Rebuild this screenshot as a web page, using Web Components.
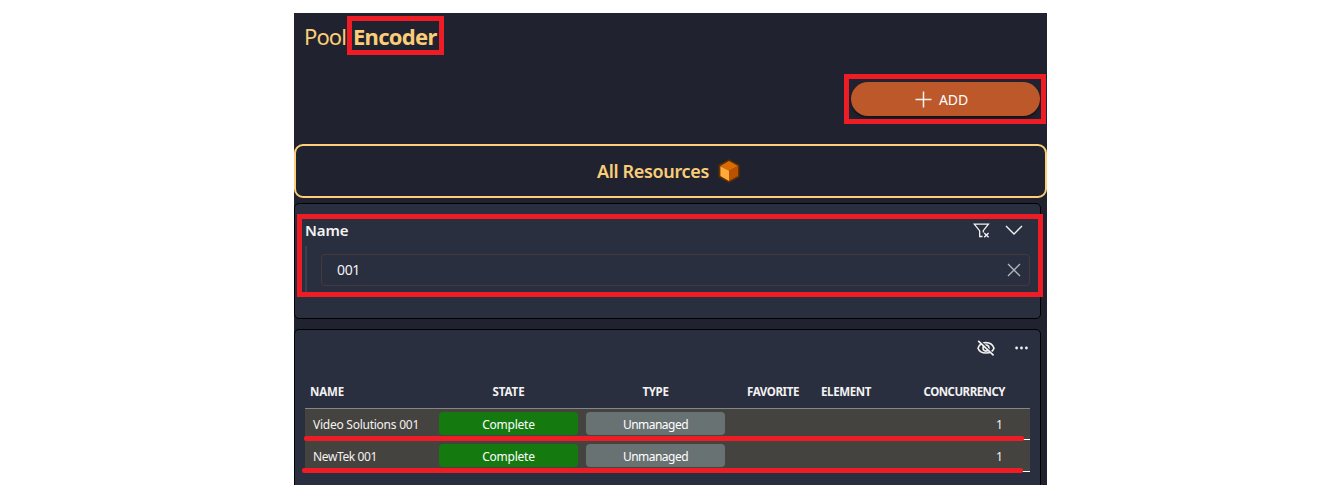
<!DOCTYPE html>
<html lang="en">
<head>
<meta charset="utf-8">
<title>Pool Encoder</title>
<style>
body{margin:0;background:#fff;height:498px;overflow:hidden;font-family:"Noto Sans","Open Sans",sans-serif;color:#f3f2f1}
</style>
</head>
<body>
<pool-page></pool-page>
<script>
// Text label whose tracking is adjusted so that it fills the width given in "w".
class FitText extends HTMLElement{
  connectedCallback(){
    const r=this.attachShadow({mode:'open'});
    r.innerHTML='<style>:host{display:inline-block;white-space:nowrap;line-height:20px}span{display:inline-block}</style><span><slot></slot></span>';
    const s=r.querySelector('span'),w=parseFloat(this.getAttribute('w'));
    const n=this.textContent.length,now=s.getBoundingClientRect().width;
    s.style.letterSpacing=((w-now)/n)+'px';
    this.style.width=w+'px';
  }
}

// Red annotation frame laid over its positioned parent.
class MarkBox extends HTMLElement{
  connectedCallback(){
    this.attachShadow({mode:'open'}).innerHTML='<style>:host{position:absolute;box-sizing:border-box;border:5px solid #ee1c24;pointer-events:none;z-index:2}</style>';
  }
}
class MarkLine extends HTMLElement{
  connectedCallback(){
    this.attachShadow({mode:'open'}).innerHTML='<style>:host{position:absolute;height:5px;border-radius:2px;background:#ee1c24;z-index:2}</style>';
  }
}

class UiIcon extends HTMLElement{
  connectedCallback(){
    const g={
      plus:[17,17,'<path d="M8.5 .5v16M.5 8.5h16" stroke-width="1.5"/>'],
      filter:[17,15,'<path d="M9.5 13.5H6.7V7.9L1.3 1.2H15.4L10.3 7.7V9.4" stroke-width="1.3"/><path d="M11.2 9.9L15.6 14.3M15.6 9.9L11.2 14.3" stroke-width="1.4"/>'],
      chevron:[18,10,'<path d="M1 1L9 9L17 1" stroke-width="1.4"/>'],
      close:[14,14,'<path d="M1 1L13 13M13 1L1 13" stroke-width="1.3" stroke="#b3b7be"/>'],
      hidden:[18,16,'<path d="M1 8.2C2.2 4.7 5 2.6 9 2.6S15.8 4.7 17 8.2C15.8 11.5 13 13 9 13S2.2 11.5 1 8.2Z" stroke-width="1.6"/><circle cx="9" cy="8.1" r="3" stroke-width="1.6"/><path d="M3 .8L17.2 15" stroke="#292f3f" stroke-width="1.6"/><path d="M1.2 .8L16.6 15.4" stroke-width="1.7"/>'],
      more:[13,4,'<g fill="#f3f2f1" stroke="none"><circle cx="1.6" cy="2" r="1.4"/><circle cx="6.5" cy="2" r="1.4"/><circle cx="11.4" cy="2" r="1.4"/></g>'],
      cube:[22,24,'<path d="M11 .8L21.2 6.2V17.8L11 23.4L.8 17.8V6.2Z" fill="#6b3600" stroke="#4c2c0c" stroke-width="1"/><path d="M11 2L20 7L11 12L2.4 7Z" fill="#d96b04" stroke="none"/><path d="M11 11.8L20 7V17L11 22Z" fill="#b95200" stroke="none"/><path d="M2.4 7.2L11 11.8V22L2.4 17Z" fill="#ffa938" stroke="none"/>']
    }[this.getAttribute('name')];
    this.attachShadow({mode:'open'}).innerHTML=`<style>:host{display:block;flex:none;width:${g[0]}px;height:${g[1]}px}svg{display:block}</style><svg width="${g[0]}" height="${g[1]}" viewBox="0 0 ${g[0]} ${g[1]}" fill="none" stroke="#f3f2f1">${g[2]}</svg>`;
  }
}

class AddButton extends HTMLElement{
  connectedCallback(){
    this.attachShadow({mode:'open'}).innerHTML=`<style>
    :host{display:flex;position:relative;box-sizing:border-box;width:189px;height:34px;border-radius:17px;background:#bd582b;box-shadow:0 2px 3px #0008;align-items:center;padding-left:64px;gap:7px;font-size:14px;color:#fff}
    mark-box{left:-7px;top:-8px;width:202px;height:50px}
    fit-text{position:relative;top:1px}</style>
    <ui-icon name="plus"></ui-icon><fit-text w="29">ADD</fit-text><mark-box></mark-box>`;
  }
}

class FilterPanel extends HTMLElement{
  connectedCallback(){
    this.attachShadow({mode:'open'}).innerHTML=`<style>
    :host{display:block;position:relative;box-sizing:border-box;width:747px;height:116px;border:1px solid #000;border-radius:5px;background:#292f3f;padding:16px 10px 0}
    .head{display:flex;align-items:center;height:20px;font-size:15px;font-weight:600;gap:15px;padding-right:7px}
    .head fit-text{margin-right:auto}
    .body{margin-top:6px;border-left:2px solid #3a4051;height:46px;padding:8px 0 0 14px;box-sizing:border-box}
    .field{box-sizing:border-box;height:32px;border:1px solid #43393f;border-radius:4px;display:flex;align-items:center;justify-content:space-between;padding:0 8px 0 15px;font-size:14px}
    mark-box{left:2px;top:10px;width:746px;height:83px}</style>
    <div class="head"><fit-text w="43.5">Name</fit-text><ui-icon name="filter"></ui-icon><ui-icon name="chevron"></ui-icon></div>
    <div class="body"><div class="field"><fit-text w="23">001</fit-text><ui-icon name="close"></ui-icon></div></div>
    <mark-box></mark-box>`;
  }
}

class ResourceRow extends HTMLElement{
  connectedCallback(){
    this.attachShadow({mode:'open'}).innerHTML=`<style>
    :host{display:grid;position:relative;box-sizing:border-box;grid-template-columns:126px 139px 139px 1fr;column-gap:8px;align-items:start;height:32px;padding-top:4px;background:#454340;border-bottom:1px solid #fff;font-size:12px}
    .name{padding:3px 0 0 8px}
    .pill{height:23px;border-radius:4px;display:flex;justify-content:center;align-items:center;padding-top:2px;box-sizing:border-box;color:#fff}
    .ok{background:#147a10}.un{background:#697273}
    .num{padding:3px 27px 0 0;text-align:right}
    fit-text{display:block}
    .num fit-text{margin-left:auto}</style>
    <div class="name"><fit-text w="${this.getAttribute('w')}">${this.getAttribute('name')}</fit-text></div>
    <div class="pill ok"><fit-text w="52.5">Complete</fit-text></div>
    <div class="pill un"><fit-text w="65">Unmanaged</fit-text></div>
    <div class="num"><fit-text w="7">1</fit-text></div><slot></slot>`;
  }
}

class ResourceTable extends HTMLElement{
  connectedCallback(){
    this.attachShadow({mode:'open'}).innerHTML=`<style>
    :host{display:block;box-sizing:border-box;width:747px;height:170px;border:1px solid #000;border-radius:5px;background:#292f3f;padding:10px 10px 0}
    .tools{display:flex;justify-content:flex-end;align-items:center;gap:20px;height:16px;padding-right:2px}
    .head{position:relative;z-index:1;display:grid;box-sizing:border-box;grid-template-columns:125px 147px 147px 70px 72px 1fr;height:52px;padding:26px 25px 0 5px;font-size:11.5px;font-weight:700;box-shadow:0 1px #85868a}
    .c{text-align:center}.r{text-align:right}
    mark-line{top:28px}</style>
    <div class="tools"><ui-icon name="hidden"></ui-icon><ui-icon name="more"></ui-icon></div>
    <div class="head"><div><fit-text w="34">NAME</fit-text></div><div class="c"><fit-text w="32">STATE</fit-text></div><div class="c"><fit-text w="26">TYPE</fit-text></div><div class="r"><fit-text w="52">FAVORITE</fit-text></div><div class="r"><fit-text w="50">ELEMENT</fit-text></div><div class="r"><fit-text w="81.5">CONCURRENCY</fit-text></div></div>
    <resource-row name="Video Solutions 001" w="106"><mark-line style="left:-1px;width:720px"></mark-line></resource-row>
    <resource-row name="NewTek 001" w="64"><mark-line style="left:-3px;width:721px"></mark-line></resource-row>`;
  }
}

class PoolPage extends HTMLElement{
  connectedCallback(){
    this.attachShadow({mode:'open'}).innerHTML=`<style>
    :host{display:block;width:753px;height:472px;margin:13px 0 0 294px;background:#20232f;overflow:hidden}
    h1{margin:0;display:flex;align-items:flex-start;gap:7px;font-size:22px;line-height:20px;font-weight:400;color:#fbcd78;height:69px;box-sizing:border-box;padding:13px 0 0 10px}
    h1 fit-text{display:block}
    h1 b{font-weight:700;position:relative;height:20px}
    h1 mark-box{left:-6px;top:-10px;width:97px;height:39px}
    .bar{display:flex;justify-content:flex-end;padding-right:7px;height:62px}
    .all{box-sizing:border-box;height:54px;border:2px solid #fdcf78;border-radius:9px;display:flex;align-items:center;justify-content:center;gap:9px;color:#fbcd78;font-size:18px;font-weight:600;padding-right:4px}
    filter-panel{margin:5px 0 10px}</style>
    <h1><fit-text w="42">Pool</fit-text><b><fit-text w="83.5">Encoder</fit-text><mark-box></mark-box></b></h1>
    <div class="bar"><add-button></add-button></div>
    <div class="all"><fit-text w="112">All Resources</fit-text><ui-icon name="cube"></ui-icon></div>
    <filter-panel></filter-panel><resource-table></resource-table>`;
  }
}
for(const [n,c] of [['fit-text',FitText],['mark-box',MarkBox],['mark-line',MarkLine],['ui-icon',UiIcon],['add-button',AddButton],['filter-panel',FilterPanel],['resource-row',ResourceRow],['resource-table',ResourceTable],['pool-page',PoolPage]])customElements.define(n,c);
</script>
</body>
</html>
